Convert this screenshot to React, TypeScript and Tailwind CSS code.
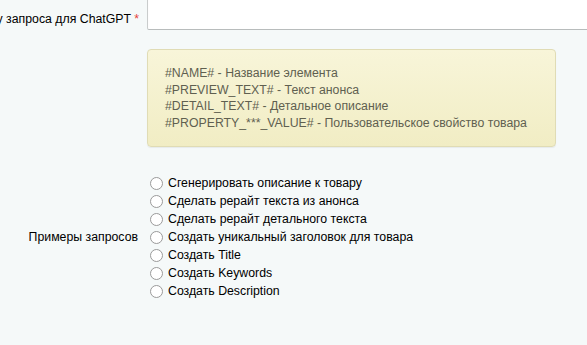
import React from "react";

const options = [
  "Сгенерировать описание к товару",
  "Сделать рерайт текста из анонса",
  "Сделать рерайт детального текста",
  "Создать уникальный заголовок для товара",
  "Создать Title",
  "Создать Keywords",
  "Создать Description",
];

export default function App() {
  return (
    <div
      className="w-[587px] h-[345px] overflow-hidden bg-[#f5f9f9] text-[12.3px] leading-[15px] text-black"
      style={{ fontFamily: '"Liberation Sans", Arial, sans-serif' }}
    >
      {/* Row 1 */}
      <div className="flex">
        <div className="w-[147px] shrink-0 pr-[8px] pt-[12px] text-right whitespace-nowrap flex justify-end overflow-hidden">
          <span>
            Текст к шаблону запроса для ChatGPT <span className="text-[#e5433b]">*</span>
          </span>
        </div>
        <div className="flex-1 mt-[-6px]">
          <div className="h-[36px] w-[460px] bg-white border border-[#c9cccc] border-b-[#b8bcbc] rounded-[2px] shadow-[inset_0_1px_1px_rgba(0,0,0,0.08)]" />
        </div>
      </div>

      {/* Row 2: note */}
      <div className="flex mt-[19px]">
        <div className="w-[147px] shrink-0" />
        <div className="w-[409px] h-[98px] rounded-[4px] border border-[#e0dcb5] bg-gradient-to-b from-[#f8f5d9] to-[#f1edc4] shadow-[0_1px_1px_rgba(0,0,0,0.06)] pl-[17px] pt-[15px] text-[#5f5f50] leading-[16.5px]">
          <div>#NAME# - Название элемента</div>
          <div>#PREVIEW_TEXT# - Текст анонса</div>
          <div>#DETAIL_TEXT# - Детальное описание</div>
          <div>#PROPERTY_***_VALUE# - Пользовательское свойство товара</div>
        </div>
      </div>

      {/* Row 3: radios */}
      <div className="flex items-center mt-[27px]">
        <div className="w-[147px] shrink-0 pr-[9px] text-right">Примеры запросов</div>
        <div className="flex flex-col">
          {options.map((o) => (
            <label key={o} className="flex items-center h-[18px] pl-[3px]">
              <span className="w-[13px] h-[13px] rounded-full border border-[#9a9a9a] bg-white shrink-0" />
              <span className="ml-[5px]">{o}</span>
            </label>
          ))}
        </div>
      </div>
    </div>
  );
}
